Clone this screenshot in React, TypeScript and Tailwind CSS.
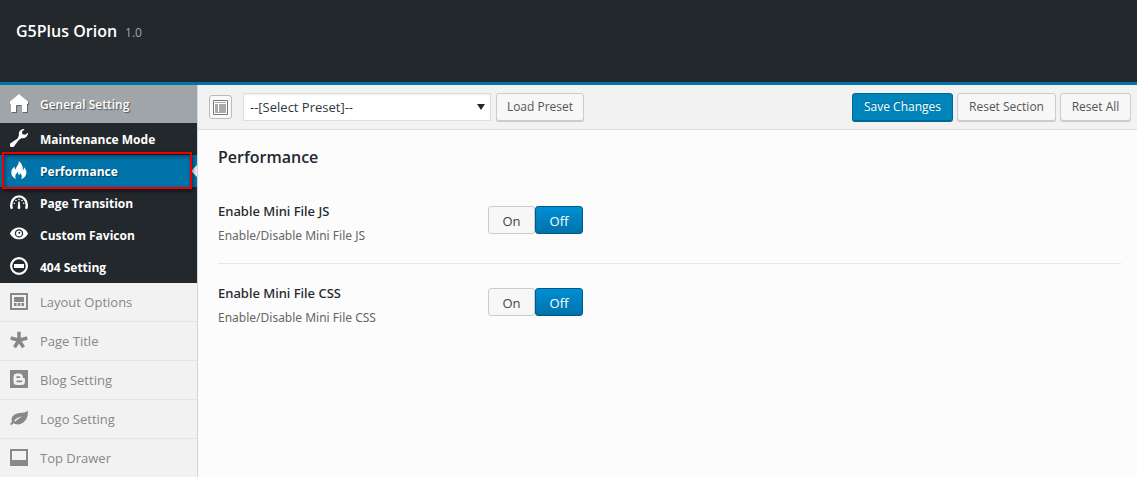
import { useState, type ReactNode } from 'react';

function Glyph({ children }: { children: ReactNode }) {
  return (
    <svg viewBox="0 0 18 18" className="mb-0.5 size-[18px] shrink-0" fill="currentColor" aria-hidden="true">
      {children}
    </svg>
  );
}

const icons = {
  home: (
    <Glyph>
      <path d="M9 0 0 7.500V10h1v8h5v-6a1 1 0 0 1 1-1h4a1 1 0 0 1 1 1v6h5v-8h1V7.500z" />
    </Glyph>
  ),
  wrench: (
    <Glyph>
      <path d="M12.200.2a5 5 0 0 0-3.200 6.100L7.600 9.600 1.300 13.700a2.400 2.400 0 1 0 3 3.200L8.800 11l3-2A5 5 0 0 0 18 3.800l-2.900 2-2.600-.5-.6-2.500L14.600.3A5 5 0 0 0 12.200.2z" />
    </Glyph>
  ),
  fire: (
    <Glyph>
      <path d="M8.800 0C9.300 3.400 6.200 5 5.700 8.500 5 8 4.400 7 4.500 5.500 2.300 7.300 1 9.700 1.300 12.300 1.600 15 3.400 17 6 18 4.600 15.400 5.700 12.600 8 11c-.3 1.800.7 2.500 1.300 3.300.5-.6.7-1.400.5-2.300C12 13.400 12.400 15.800 11.200 18c3-.7 5-3.100 5.200-6 .2-2.400-1-4.300-2.600-6 .3 1.500 0 2.600-.9 3.500C13 5.500 11.800 2.200 8.800 0z" />
    </Glyph>
  ),
  dashboard: (
    <Glyph>
      <path d="M2 15.800A8 8 0 0 1 1.200 12C1.200 7.400 4.600 3.400 9 3.400s7.800 4 7.800 8.600a8 8 0 0 1-.8 3.800" fill="none" stroke="currentColor" strokeWidth="2.400" />
      <path d="M8.300 8.500h1.400l.6 6.200a1.300 1.300 0 0 1-2.600 0z" />
      <circle cx="9" cy="6.500" r=".8" />
      <circle cx="6" cy="7.500" r=".8" />
      <circle cx="12" cy="7.500" r=".8" />
      <circle cx="4.300" cy="10.300" r=".8" />
      <circle cx="13.700" cy="10.300" r=".8" />
    </Glyph>
  ),
  eye: (
    <Glyph>
      <path fillRule="evenodd" d="M9 2.500C4.800 2.500 1.600 5 0 8.500 1.600 12 4.800 14.300 9 14.300s7.400-2.300 9-5.800c-1.600-3.500-4.800-6-9-6zm0 1.700a4.200 4.200 0 1 1 0 8.400 4.200 4.200 0 0 1 0-8.400z" />
      <path fillRule="evenodd" d="M9 5.500a2.900 2.900 0 1 0 0 5.800 2.900 2.900 0 0 0 0-5.800zm.3 1.300a1 1 0 1 1 0 2 1 1 0 0 1 0-2z" />
    </Glyph>
  ),
  minus: (
    <Glyph>
      <circle cx="9" cy="9" r="7.900" fill="none" stroke="currentColor" strokeWidth="2.200" />
      <path d="M4 7h10v4H4z" />
    </Glyph>
  ),
  layout: (
    <Glyph>
      <path fillRule="evenodd" d="M0 1h18v17H0zM2 3v13h14V3z" />
      <path d="M4 5h10v5H4zM4 11h2.600v3H4zM7.700 11h2.600v3H7.700zM11.400 11H14v3h-2.600z" />
    </Glyph>
  ),
  asterisk: (
    <Glyph>
      <path d="M9 9.300V.8M9 9.300.7 7M9 9.300 17.300 7M9 9.300l-4.500 6.900M9 9.300l4.500 6.900" fill="none" stroke="currentColor" strokeWidth="3.500" />
    </Glyph>
  ),
  blogger: (
    <Glyph>
      <path fillRule="evenodd" d="M0 0h18v18H0zM7 3.500A3.500 3.500 0 0 0 3.500 7v4.500A3.500 3.500 0 0 0 7 15h4.500a3.500 3.500 0 0 0 3.500-3.500V9.500c0-.9-.5-1.300-1.400-1.300-.6 0-.8-.4-.8-1.200 0-2-1.300-3.500-3.300-3.500zM7.100 6.200h2.400a.8.8 0 0 1 0 1.700H7.100a.8.8 0 0 1 0-1.700zm0 4.300h4.500a.8.8 0 0 1 0 1.700H7.100a.8.8 0 0 1 0-1.700z" />
    </Glyph>
  ),
  leaf: (
    <Glyph>
      <path fillRule="evenodd" d="M17.600 1.500c-1 1.700-3 2-5.600 2.200C6.500 4 1.800 6 1.500 10.200c0 1 .2 1.600.6 2.200L0 15l1.500 1.300L3.300 14C5.500 15.800 9 16 12 14.300c4.300-2.400 6.600-7.500 5.600-12.800zM4.300 11.800C6 9 8.500 7.800 12.600 7.500 9.800 8.700 7.500 10 5.200 12.700z" />
    </Glyph>
  ),
  tray: (
    <Glyph>
      <path fillRule="evenodd" d="M0 1h18v17H0zM2 3v9h14V3z" />
    </Glyph>
  ),
};

const subItems = [
  { label: 'Maintenance Mode', icon: icons.wrench },
  { label: 'Performance', icon: icons.fire },
  { label: 'Page Transition', icon: icons.dashboard },
  { label: 'Custom Favicon', icon: icons.eye },
  { label: '404 Setting', icon: icons.minus },
];

const sections = [
  { label: 'Layout Options', icon: icons.layout },
  { label: 'Page Title', icon: icons.asterisk },
  { label: 'Blog Setting', icon: icons.blogger },
  { label: 'Logo Setting', icon: icons.leaf },
  { label: 'Top Drawer', icon: icons.tray },
];

function Sidebar() {
  return (
    <nav className="w-[198px] shrink-0 border-r border-[#d5d5d5] bg-[#f2f2f2] leading-5">
      <a
        href="#general"
        className="flex h-[38px] items-center gap-3 bg-[#a0a5aa] px-2.5 text-[12px] font-semibold text-white [text-shadow:1px_1px_1px_#555] [&>svg]:drop-shadow-[1px_1px_0_#666]"
      >
        {icons.home}
        <span className="pt-0.5">General Setting</span>
      </a>
      <ul className="bg-[#23282d] text-[12px] font-bold text-white">
        {subItems.map(({ label, icon }) => {
          const active = label === 'Performance';
          return (
            <li key={label} className="relative">
              <a
                href={`#${label}`}
                aria-current={active ? 'page' : undefined}
                className={`flex h-8 items-center gap-3 px-2.5 ${active ? 'bg-[#0073aa] [text-shadow:1px_1px_1px_#003d5c]' : ''}`}
              >
                {icon}
                <span className="pt-0.5">{label}</span>
              </a>
              {active && (
                <>
                  <span className="absolute top-2.5 right-0 border-y-[6px] border-r-[6px] border-y-transparent border-r-[#f1f1f1]" />
                  <span className="pointer-events-none absolute -top-[3px] -bottom-0.5 left-0.5 z-10 w-[190px] border-2 border-[#ee0000] shadow-[1px_2px_4px_rgba(0,0,0,0.6),inset_1px_2px_4px_rgba(0,0,0,0.45)]" />
                </>
              )}
            </li>
          );
        })}
      </ul>
      <ul className="text-[13px] text-[#888888]">
        {sections.map(({ label, icon }) => (
          <li key={label} className="border-b border-[#e5e5e5]">
            <a href={`#${label}`} className="flex h-[38px] items-center gap-3 px-2.5">
              {icon}
              {label}
            </a>
          </li>
        ))}
      </ul>
    </nav>
  );
}

const buttonBase = 'h-7 shrink-0 rounded-[3px] border text-center text-[12px] leading-[26px]';
const plainButton = 'border-[#cccccc] bg-[#f7f7f7] text-[#555555] shadow-[0_1px_0_#cccccc]';

function Toolbar() {
  return (
    <div className="flex h-[45px] items-center border-b border-[#dedede] bg-[#f2f2f2] pr-1.5 pl-[11px]">
      <button
        type="button"
        aria-label="Expand options"
        className="flex h-6 w-[23px] items-center justify-center rounded-[3px] border border-[#bbbbbb] bg-[#f9f9f9]"
      >
        <svg viewBox="0 0 15 15" className="size-[15px]" aria-hidden="true">
          <path d="M.5.500h14v14H.5z" fill="#fff" stroke="#777" />
          <path d="M2 2h11v1H2zM2 4h3v8H2zM6 4h7v8H6zM2 12h11v1H2z" fill="#aaa" />
        </svg>
      </button>
      <div className="relative ml-[11px] w-[248px]">
        <select
          aria-label="Preset"
          className="block h-7 w-full appearance-none border border-[#dddddd] bg-white pt-0.5 pr-6 pl-1.5 text-[13px] text-[#32373c] shadow-[inset_0_1px_2px_rgba(0,0,0,0.07)]"
        >
          <option>--[Select Preset]--</option>
        </select>
        <span className="pointer-events-none absolute top-[11px] right-1.5 border-x-4 border-t-[6px] border-x-transparent border-t-[#23282d]" />
      </div>
      <button type="button" className={`${buttonBase} ${plainButton} ml-[5px] w-[88px]`}>
        Load Preset
      </button>
      <div className="ml-auto flex gap-1">
        <button
          type="button"
          className={`${buttonBase} w-[101px] border-[#006799] bg-[#0085ba] text-white shadow-[0_1px_0_#006799] [text-shadow:0_-1px_1px_#006799]`}
        >
          Save Changes
        </button>
        <button type="button" className={`${buttonBase} ${plainButton} w-[99px]`}>
          Reset Section
        </button>
        <button type="button" className={`${buttonBase} ${plainButton} w-[71px]`}>
          Reset All
        </button>
      </div>
    </div>
  );
}

function ToggleField({ name, title, hint }: { name: string; title: string; hint: string }) {
  const [value, setValue] = useState('Off');
  return (
    <div className="flex h-[82px] border-b border-[#e7e7e7] pt-6 last:border-b-0">
      <div className="-mt-[5px] w-[270px] shrink-0 font-['Noto_Sans',sans-serif]">
        <h3 className="text-[13px] leading-5 font-medium text-[#23282d]">{title}</h3>
        <p className="mt-[5px] text-[12px] leading-5 text-[#666666]">{hint}</p>
      </div>
      <div role="radiogroup" aria-label={title} className="flex h-7 text-[13px] leading-[28px]">
        {['On', 'Off'].map((option) => (
          <label
            key={option}
            className={
              value === option
                ? 'w-12 rounded-[3px] border border-[#005a87] bg-linear-to-b from-[#008fd5] to-[#0073aa] text-center text-white'
                : 'w-[47px] rounded-[3px] border border-[#cccccc] bg-[#f7f7f7] text-center text-[#444444]'
            }
          >
            <input
              type="radio"
              name={name}
              value={option}
              checked={value === option}
              onChange={() => setValue(option)}
              className="sr-only"
            />
            {option}
          </label>
        ))}
      </div>
    </div>
  );
}

export default function App() {
  return (
    <div className="flex h-screen flex-col overflow-hidden bg-[#fcfcfc] font-['Open_Sans','Noto_Sans',sans-serif]">
      <header className="flex h-[85px] shrink-0 items-baseline gap-2 border-b-[3px] border-[#0073aa] bg-[#23282d] px-4 pt-[19px]">
        <h1 className="text-[16px] leading-6 font-semibold text-white">G5Plus Orion</h1>
        <span className="text-[12px] text-[#a0a5aa]">1.0</span>
      </header>
      <div className="flex min-h-0 flex-1">
        <Sidebar />
        <div className="min-w-0 flex-1">
          <Toolbar />
          <main className="pr-4 pl-5">
            <h2 className="pt-[15px] pb-[13px] text-[16px] leading-6 font-semibold text-[#23282d]">Performance</h2>
            <ToggleField name="mini-js" title="Enable Mini File JS" hint="Enable/Disable Mini File JS" />
            <ToggleField name="mini-css" title="Enable Mini File CSS" hint="Enable/Disable Mini File CSS" />
          </main>
        </div>
      </div>
    </div>
  );
}
